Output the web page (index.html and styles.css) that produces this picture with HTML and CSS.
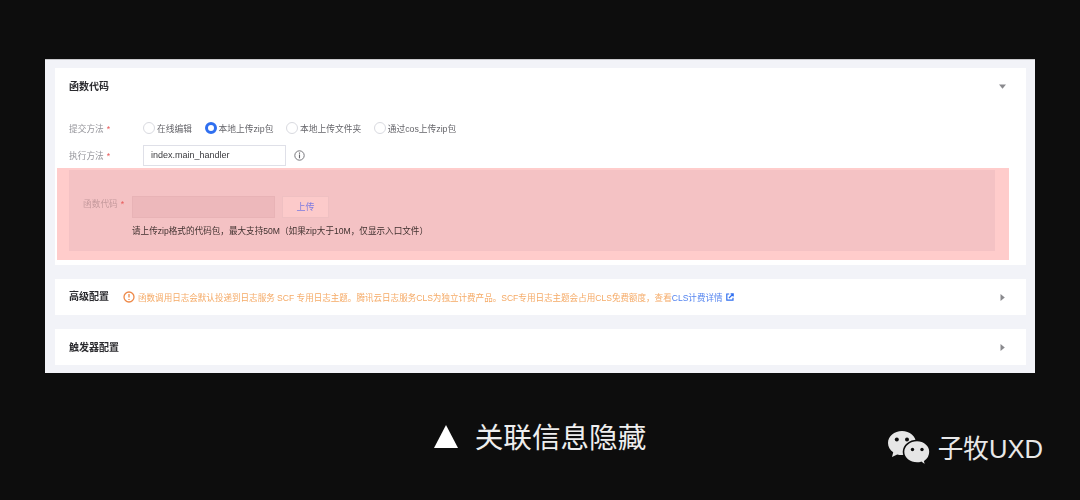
FILE: index.html
```html
<!DOCTYPE html>
<html lang="zh">
<head>
<meta charset="utf-8">
<title>关联信息隐藏</title>
<link rel="stylesheet" href="styles.css">
</head>
<body>
<main class="shot">
  <section class="card card-code">
    <div class="card-head">
      <h2 class="card-title">函数代码</h2>
      <svg class="caret" width="7" height="5" viewBox="0 0 7 5"><path d="M0 .5h7L3.500 4.800z" fill="#8a8a8e"/></svg>
    </div>
    <div class="form-row row-radio">
      <span class="label">提交方法<i class="req">*</i></span>
      <div class="radios">
        <span class="radio"><i class="dot"></i>在线编辑</span>
        <span class="radio"><i class="dot on"></i>本地上传zip包</span>
        <span class="radio"><i class="dot"></i>本地上传文件夹</span>
        <span class="radio"><i class="dot"></i>通过cos上传zip包</span>
      </div>
    </div>
    <div class="form-row row-input">
      <span class="label">执行方法<i class="req">*</i></span>
      <span class="input">index.main_handler</span>
      <svg class="info" width="11" height="11" viewBox="0 0 11 11"><circle cx="5.5" cy="5.5" r="4.7" fill="none" stroke="#77777c"/><path d="M5.5 4.6v3.6M5.5 2.6v1.1" stroke="#66666b" stroke-width="1.1"/></svg>
    </div>
    <div class="mask">
      <div class="mask-inner">
        <div class="upload-row">
          <span class="label label-upload">函数代码<i class="req">*</i></span>
          <span class="file"></span>
          <span class="btn">上传</span>
        </div>
        <p class="hint">请上传zip格式的代码包，最大支持50M（如果zip大于10M，仅显示入口文件）</p>
      </div>
    </div>
  </section>
  <section class="card card-row">
    <h2 class="card-title title-adv">高级配置</h2>
    <svg class="warn" width="12" height="12" viewBox="0 0 12 12"><circle cx="6" cy="6" r="5" fill="none" stroke="#ee8a4a" stroke-width="1.3"/><path d="M6 3v3.6M6 7.9v1.2" stroke="#ee8a4a" stroke-width="1.3"/></svg>
    <span class="warn-text">函数调用日志会默认投递到日志服务 SCF 专用日志主题。腾讯云日志服务CLS为独立计费产品。SCF专用日志主题会占用CLS免费额度，查看<span class="link">CLS计费详情</span></span>
    <svg class="ext" width="8" height="8" viewBox="0 0 8 8"><path d="M3.2 1H.8v6.2H7V4.8" fill="none" stroke="#2f6ff0" stroke-width="1.2"/><path d="M3 5l4-4M4.6.8h2.6v2.6" fill="none" stroke="#2f6ff0" stroke-width="1.2"/></svg>
    <svg class="arrow" width="5" height="7" viewBox="0 0 5 7"><path d="M.5 0v7L4.800 3.500z" fill="#8a8a8e"/></svg>
  </section>
  <section class="card card-row card-last">
    <h2 class="card-title title-last">触发器配置</h2>
    <svg class="arrow" width="5" height="7" viewBox="0 0 5 7"><path d="M.5 0v7L4.800 3.500z" fill="#8a8a8e"/></svg>
  </section>
</main>
<footer class="foot">
  <div class="caption"><span class="tri"></span>关联信息隐藏</div>
  <div class="mark">
    <svg class="wechat" width="44" height="38" viewBox="0 0 44 38">
      <path d="M15 1C7.300 1 1 6.300 1 13c0 3.800 2 7 5.200 9.300L5 27l5.200-2.600c1.500.4 3.100.7 4.800.7 7.700 0 14-5.400 14-12.100S22.700 1 15 1z" fill="#e6e6e6"/>
      <path d="M30 10.500c-7.400 0-13.500 5-13.500 11.300S22.600 33 30 33c1.500 0 2.900-.2 4.200-.6L39 36l-1.200-4.700c3.200-2.100 5.200-5.500 5.200-9.500 0-6.300-5.700-11.300-13-11.300z" fill="#e6e6e6" stroke="#0d0d0d" stroke-width="1.600"/>
      <circle cx="9.800" cy="9.500" r="2" fill="#0d0d0d"/><circle cx="20" cy="9.500" r="2" fill="#0d0d0d"/>
      <circle cx="25.500" cy="19.500" r="1.700" fill="#0d0d0d"/><circle cx="35" cy="19.500" r="1.700" fill="#0d0d0d"/>
    </svg>
    <span class="mark-text">子牧UXD</span>
  </div>
</footer>
</body>
</html>
```
FILE: styles.css
```css
* { box-sizing: border-box; }
html, body { margin: 0; padding: 0; }
body {
  width: 1080px;
  height: 500px;
  overflow: hidden;
  background: #0d0d0d;
  font-family: "Liberation Sans", "Noto Sans CJK SC", sans-serif;
  padding-top: 59px;
}
.shot {
  width: 990px;
  height: 314px;
  margin-left: 45px;
  background: #f2f3f8;
  border-top: 1px solid #c9c9cc;
  padding: 8px 9px 0 10px;
  display: flex;
  flex-direction: column;
  filter: blur(0.35px);
}
.card { background: #fff; }
.card-code {
  height: 197px;
  padding-left: 14px;
}
.card-head {
  height: 37px;
  display: flex;
  align-items: center;
  justify-content: space-between;
  padding-right: 20px;
}
.card-title {
  margin: 0;
  font-size: 10px;
  font-weight: 700;
  color: #2a2a2e;
  line-height: 14px;
}
.title-last { padding-top: 1px; }
.form-row { display: flex; align-items: center; }
.row-radio { margin-top: 16px; height: 14px; }
.row-input { margin-top: 10px; height: 21px; }
.label {
  width: 74px;
  flex: none;
  font-size: 8.7px;
  color: #94949a;
}
.req { color: #e85a5a; font-style: normal; margin-left: 3px; }
.radios { display: flex; }
.radio {
  display: flex;
  align-items: center;
  font-size: 8.75px;
  color: #66666b;
  margin-right: 12.5px;
}
.dot {
  width: 12px;
  height: 12px;
  border-radius: 50%;
  border: 1px solid #d9dae0;
  margin-right: 2px;
  background: #fff;
}
.dot.on { border: 3px solid #2f6ff0; }
.input {
  width: 143px;
  height: 21px;
  flex: none;
  border: 1px solid #dfe0e8;
  font-size: 9px;
  line-height: 19px;
  padding-left: 7px;
  color: #3a3a3e;
}
.info { margin-left: 8px; }
.mask {
  margin: 2px 17px 0 -12px;
  height: 92px;
  background: #ffcccb;
  padding: 2px 14px 9px 12px;
}
.mask-inner {
  height: 81px;
  background: #f4c2c4;
  padding: 26px 0 0 14px;
}
.upload-row { display: flex; align-items: flex-start; }
.label-upload { width: 49px; color: #c59a9d; line-height: 16px; }
.file {
  width: 143px;
  height: 22px;
  background: #edb8bb;
  border: 1px solid #e8b3b6;
}
.btn {
  width: 47px;
  height: 22px;
  margin-left: 7px;
  background: #fccaca;
  border: 1px solid #efc0c2;
  font-size: 9px;
  line-height: 20px;
  text-align: center;
  color: #7d7be0;
}
.hint {
  margin: 6px 0 0 49px;
  font-size: 8.6px;
  line-height: 14px;
  color: #40312f;
}
.card-row {
  height: 36px;
  margin-top: 14px;
  padding: 0 21px 0 14px;
  display: flex;
  align-items: center;
}
.card-last { justify-content: space-between; }
.title-adv { width: 54px; flex: none; }
.warn { flex: none; margin-right: 3px; }
.warn-text {
  font-size: 8.55px;
  color: #f5aa66;
  white-space: nowrap;
}
.link { color: #5585f0; }
.ext { margin-left: 3px; flex: none; }
.arrow { margin-left: auto; flex: none; }
.foot {
  height: 127px;
  position: relative;
}
.caption {
  display: flex;
  align-items: center;
  justify-content: center;
  padding-top: 43px;
  font-family: "Noto Sans CJK SC", sans-serif;
  font-size: 28.6px;
  line-height: 40px;
  color: #eeeeee;
}
.tri {
  width: 0;
  height: 0;
  border-left: 12px solid transparent;
  border-right: 12px solid transparent;
  border-bottom: 23px solid #fff;
  margin-right: 17px;
}
.mark {
  position: absolute;
  right: 37px;
  top: 57px;
  display: flex;
  align-items: center;
  gap: 7px;
}
.mark-text {
  font-family: "Liberation Sans", "Noto Sans CJK SC", sans-serif;
  font-size: 25.6px;
  line-height: 38px;
  color: #e8e8e8;
}
```
